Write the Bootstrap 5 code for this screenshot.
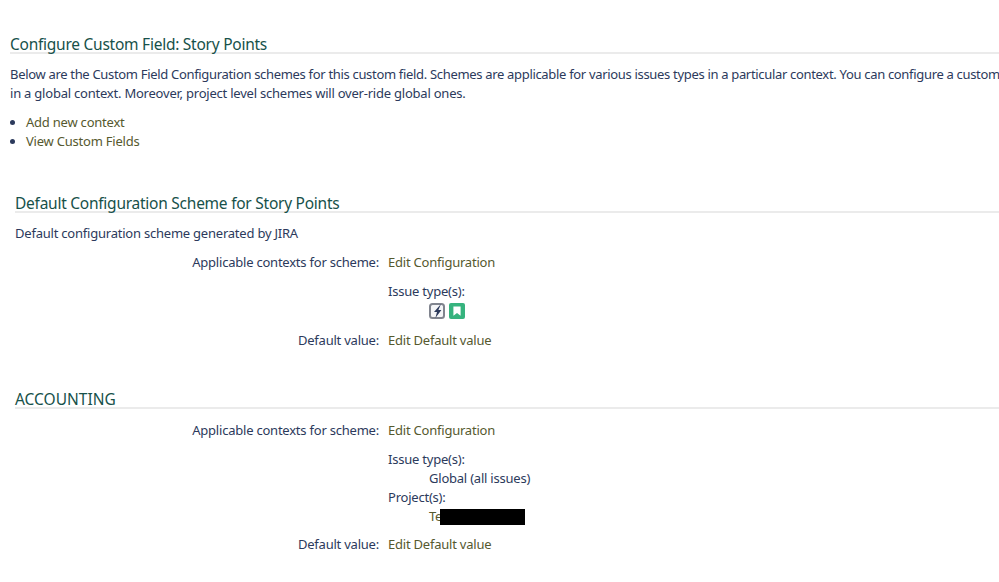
<!DOCTYPE html>
<html lang="en">
<head>
<meta charset="utf-8">
<title>Configure Custom Field: Story Points</title>
<link href="https://cdn.jsdelivr.net/npm/bootstrap@5.3.0/dist/css/bootstrap.min.css" rel="stylesheet">
<style>
html,body{height:582px;overflow:hidden;background:#fff}
body{font-family:"Noto Sans","Open Sans",sans-serif;font-size:13px;line-height:19px;letter-spacing:-.22px;color:#2c3a5c}
a{color:#56592f;text-decoration:none}
.shell{padding:33px 0 0 10px}
.head-main,.head-sub{font-family:inherit;font-weight:400;color:#17514a;font-size:15.5px;letter-spacing:-.25px;line-height:16px;padding-top:3px;margin:0;border-bottom:2px solid #ebebeb}
.intro{white-space:nowrap;margin:11px 0 0}
.intro-tight{letter-spacing:-.32px}
.intro-links{list-style:disc;margin:10px 0 0;padding-left:16px}
.scheme{margin-left:5px}
.scheme-one{margin-top:41px}
.scheme-two{margin-top:38px}
.scheme-two .head-sub{letter-spacing:0}
.scheme-desc{margin:11px 0 0}
.cfg{display:grid;grid-template-columns:364px 1fr;column-gap:9px}
.cfg-key{text-align:right}
.gap-a{margin-top:10px}
.gap-b{margin-top:9px}
.gap-c{margin-top:10px}
.gap-d{margin-top:12px}
.indent{padding-left:41px}
.ico-row{display:flex;gap:4px;padding-top:2px;height:21px}
.mask{display:inline-block;width:85px;height:16px;background:#000;vertical-align:-4px;margin-left:-2px}
</style>
</head>
<body>
<div class="shell">
  <h2 class="head-main">Configure Custom Field: Story Points</h2>
  <p class="intro"><span class="intro-tight">Below are the Custom Field Configuration schemes for this custom field. Schemes are applicable for various issues types in a particular context. You can configure a custom field</span><br>in a global context. Moreover, project level schemes will over-ride global ones.</p>
  <ul class="intro-links">
    <li><a href="#">Add new context</a></li>
    <li><a href="#">View Custom Fields</a></li>
  </ul>

  <section class="scheme scheme-one">
    <h3 class="head-sub">Default Configuration Scheme for Story Points</h3>
    <p class="scheme-desc">Default configuration scheme generated by JIRA</p>
    <div class="cfg gap-a">
      <div class="cfg-key">Applicable contexts for scheme:</div>
      <div><a href="#">Edit Configuration</a></div>
    </div>
    <div class="cfg gap-c">
      <div></div>
      <div>
        <div>Issue type(s):</div>
        <div class="indent ico-row">
          <svg width="16" height="16" viewBox="0 0 16 16"><rect x="1" y="1" width="14" height="14" rx="2.5" fill="#f4f5f7" stroke="#80848e" stroke-width="2"/><path d="M12 1 5 9h3L6.4 15 12.4 7H9.4z" fill="#2c3a5c"/></svg>
          <svg width="16" height="16" viewBox="0 0 16 16"><rect width="16" height="16" rx="2" fill="#36b37e"/><path d="M4.4 3.4h7.2v9.4L8 10l-3.6 2.8z" fill="#fff"/></svg>
        </div>
      </div>
    </div>
    <div class="cfg gap-b">
      <div class="cfg-key">Default value:</div>
      <div><a href="#">Edit Default value</a></div>
    </div>
  </section>

  <section class="scheme scheme-two">
    <h3 class="head-sub">ACCOUNTING</h3>
    <div class="cfg gap-d">
      <div class="cfg-key">Applicable contexts for scheme:</div>
      <div><a href="#">Edit Configuration</a></div>
    </div>
    <div class="cfg gap-c">
      <div></div>
      <div>
        <div>Issue type(s):</div>
        <div class="indent">Global (all issues)</div>
        <div>Project(s):</div>
        <div class="indent"><a href="#">Te</a><span class="mask"></span></div>
      </div>
    </div>
    <div class="cfg gap-b">
      <div class="cfg-key">Default value:</div>
      <div><a href="#">Edit Default value</a></div>
    </div>
  </section>
</div>
<script src="https://cdn.jsdelivr.net/npm/bootstrap@5.3.0/dist/js/bootstrap.bundle.min.js"></script>
</body>
</html>
